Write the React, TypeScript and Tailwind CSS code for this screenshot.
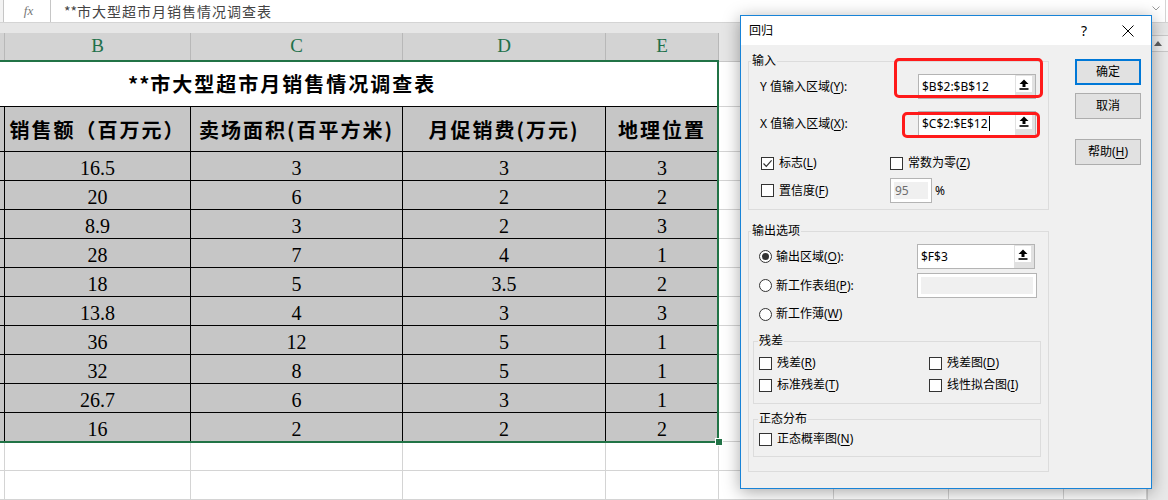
import React from 'react';

// 工作表数据
const heads = ['销售额（百万元）', '卖场面积(百平方米)', '月促销费(万元)', '地理位置'];

const data = [
  ['16.5', '3', '3', '3'],
  ['20', '6', '2', '2'],
  ['8.9', '3', '2', '3'],
  ['28', '7', '4', '1'],
  ['18', '5', '3.5', '2'],
  ['13.8', '4', '3', '3'],
  ['36', '12', '5', '1'],
  ['32', '8', '5', '1'],
  ['26.7', '6', '3', '1'],
  ['16', '2', '2', '2'],
];

const tableCols = ['w-[186px]', 'w-[212px]', 'w-[203px]', 'w-[113px]'];
const restCols = ['w-[115px]', 'w-[115px]', 'w-[115px]', 'w-[83px]'];
const letters = ['B', 'C', 'D', 'E'];

const EmptyCells = () => (
  <>
    {restCols.map((w, i) => (
      <div key={i} className={`${w} shrink-0 border-r border-b border-[#d4d4d4] bg-white`} />
    ))}
  </>
);

const SheetRow = ({ cells, head }: { cells: string[]; head?: boolean }) => (
  <div className={`flex ${head ? 'h-[45px]' : 'h-[29px]'}`}>
    <div className="w-[5px] shrink-0 bg-[#c6c6c6] border-r border-b border-black" />
    {cells.map((c, i) => (
      <div
        key={i}
        className={`${tableCols[i]} shrink-0 bg-[#c6c6c6] border-r border-b border-black flex items-center justify-center text-black ${
          head
            ? "pt-[2px] text-[20px] font-semibold tracking-[2px] font-['Noto_Sans_CJK_SC',sans-serif]"
            : "pt-[4px] text-[20px] leading-none font-['Liberation_Serif','Noto_Sans_CJK_SC',serif]"
        }`}
      >
        {c}
      </div>
    ))}
    <EmptyCells />
  </div>
);

const BlankRow = () => (
  <div className="flex h-[29px]">
    <div className="w-[5px] shrink-0 border-r border-b border-[#d4d4d4] bg-white" />
    {tableCols.map((w, i) => (
      <div key={i} className={`${w} shrink-0 border-r border-b border-[#d4d4d4] bg-white`} />
    ))}
    <EmptyCells />
  </div>
);

// 对话框小部件
const U = ({ children }: { children: React.ReactNode }) => (
  <span className="underline underline-offset-[2px]">{children}</span>
);

const UpArrow = () => (
  <svg width="10" height="11" viewBox="0 0 10 11">
    <path d="M5 0.5 L9.5 5 H6.5 V8 H3.5 V5 H0.5 Z" fill="#000" />
    <rect x="0.5" y="9.2" width="9" height="1.6" fill="#000" />
  </svg>
);

const RefInput = ({ value, caret }: { value: string; caret?: boolean }) => (
  <div className="w-[118px] h-[25px] border border-[#b4b4b4] bg-white flex">
    <div className="flex-1 flex items-center pl-[3px] text-[12px]">
      {value}
      {caret && <span className="w-px h-[15px] bg-black ml-px" />}
    </div>
    <div className="w-[20px] bg-[#e1e1e1] pt-[1px] pl-[1px]">
      <div className="w-[16px] h-[16px] bg-white flex items-center justify-center">
        <UpArrow />
      </div>
    </div>
  </div>
);

const DisabledBox = ({ className, children }: { className: string; children?: React.ReactNode }) => (
  <div className={`${className} h-[25px] border border-[#b4b4b4] bg-white p-[3px]`}>
    <div className="w-full h-full bg-[#f0f0f0] flex items-center pl-[1px] text-[#6d6d6d]">{children}</div>
  </div>
);

const Check = ({ label, checked, className = '' }: { label: React.ReactNode; checked?: boolean; className?: string }) => (
  <div className={`flex items-center gap-[5px] ${className}`}>
    <span className="w-[13px] h-[13px] shrink-0 border border-[#333] bg-white flex items-center justify-center">
      {checked && (
        <svg width="11" height="11" viewBox="0 0 11 11">
          <path d="M1.5 5.5 L4.3 8.3 L9.6 2.4" fill="none" stroke="#333" strokeWidth="1.2" />
        </svg>
      )}
    </span>
    <span>{label}</span>
  </div>
);

const Radio = ({ label, checked, className = '' }: { label: React.ReactNode; checked?: boolean; className?: string }) => (
  <div className={`flex items-center gap-[4px] ${className}`}>
    <span className="w-[13px] h-[13px] shrink-0 rounded-full border border-[#333] bg-white flex items-center justify-center">
      {checked && <span className="w-[7px] h-[7px] rounded-full bg-[#333]" />}
    </span>
    <span>{label}</span>
  </div>
);

const Legend = ({ children, className = 'ml-[2px]' }: { children: React.ReactNode; className?: string }) => (
  <legend className={`${className} px-[1px] leading-[16px]`}>{children}</legend>
);

const DialogButton = ({ children, primary, className = '' }: { children: React.ReactNode; primary?: boolean; className?: string }) => (
  <button
    className={`w-[66px] h-[26px] bg-[#e1e1e1] flex items-center justify-center text-[12px] ${
      primary ? 'border-2 border-[#0078d7]' : 'border border-[#adadad]'
    } ${className}`}
  >
    {children}
  </button>
);

const RegressionDialog = () => (
  <div className="absolute left-[740px] top-[15px] w-[412px] h-[474px] border border-[#1883d7] bg-[#f0f0f0] shadow-[0_3px_16px_rgba(0,0,0,0.35)] flex flex-col text-[12px] text-black font-['Noto_Sans','Noto_Sans_CJK_SC',sans-serif]">
    {/* 标题栏 */}
    <div className="h-[29px] bg-white flex items-center pl-[8px] pr-[17px] shrink-0">
      <span>回归</span>
      <span className="ml-auto text-[14px]">?</span>
      <svg className="ml-[35px]" width="12" height="12" viewBox="0 0 12 12">
        <path d="M0.5 0.5 L11.5 11.5 M11.5 0.5 L0.5 11.5" stroke="#000" strokeWidth="1" />
      </svg>
    </div>

    <div className="flex flex-1">
      <div className="pl-[7px] pt-[8px] w-[308px]">
        <fieldset className="w-[301px] border border-[#dcdcdc]">
          <Legend>输入</Legend>
          <div className="pl-[11px] pt-[5px] pb-[6px]">
            <div className="flex items-center h-[25px]">
              <span className="w-[158px]">Y 值输入区域(<U>Y</U>):</span>
              <RefInput value="$B$2:$B$12" />
            </div>
            <div className="flex items-center h-[25px] mt-[12px]">
              <span className="w-[158px]">X 值输入区域(<U>X</U>):</span>
              <RefInput value="$C$2:$E$12" caret />
            </div>
            <div className="flex items-center h-[16px] mt-[19px] pl-[1px]">
              <Check className="w-[129px]" checked label={<>标志(<U>L</U>)</>} />
              <Check label={<>常数为零(<U>Z</U>)</>} />
            </div>
            <div className="flex items-center h-[25px] mt-[7px] pl-[1px]">
              <Check className="w-[129px]" label={<>置信度(<U>F</U>)</>} />
              <DisabledBox className="w-[42px]">95</DisabledBox>
              <span className="ml-[3px]">%</span>
            </div>
          </div>
        </fieldset>

        <fieldset className="w-[301px] mt-[13px] border border-[#dcdcdc] pb-[14px]">
          <Legend>输出选项</Legend>
          <div className="pl-[10px] pt-[5px]">
            <div className="flex items-center h-[25px]">
              <Radio className="w-[158px]" checked label={<>输出区域(<U>O</U>):</>} />
              <RefInput value="$F$3" />
            </div>
            <div className="flex items-center h-[25px] mt-[4px]">
              <Radio className="w-[158px]" label={<>新工作表组(<U>P</U>):</>} />
              <DisabledBox className="w-[120px]" />
            </div>
            <div className="flex items-center h-[16px] mt-[8px]">
              <Radio label={<>新工作薄(<U>W</U>)</>} />
            </div>
          </div>

          <fieldset className="ml-[4px] mr-[7px] mt-[11px] border border-[#dcdcdc]">
            <Legend className="ml-[4px]">残差</Legend>
            <div className="pl-[5px] pt-[6px] pb-[10px]">
              <div className="flex items-center h-[16px]">
                <Check className="w-[170px]" label={<>残差(<U>R</U>)</>} />
                <Check label={<>残差图(<U>D</U>)</>} />
              </div>
              <div className="flex items-center h-[16px] mt-[6px]">
                <Check className="w-[170px]" label={<>标准残差(<U>T</U>)</>} />
                <Check label={<>线性拟合图(<U>I</U>)</>} />
              </div>
            </div>
          </fieldset>

          <fieldset className="ml-[4px] mr-[7px] mt-[7px] border border-[#dcdcdc]">
            <Legend className="ml-[4px]">正态分布</Legend>
            <div className="pl-[5px] pt-[4px] pb-[9px]">
              <div className="flex items-center h-[16px]">
                <Check label={<>正态概率图(<U>N</U>)</>} />
              </div>
            </div>
          </fieldset>
        </fieldset>
      </div>

      <div className="ml-[26px] pt-[14px] flex flex-col">
        <DialogButton primary>确定</DialogButton>
        <DialogButton className="mt-[8px]">取消</DialogButton>
        <DialogButton className="mt-[20px]">
          帮助(<U>H</U>)
        </DialogButton>
      </div>
    </div>

    {/* 红色标注框 */}
    <div className="absolute left-[153px] top-[42px] w-[149px] h-[40px] border-[3px] border-[#ff1a1a] rounded-[5px]" />
    <div className="absolute left-[161px] top-[96px] w-[138px] h-[26px] border-[3px] border-[#ff1a1a] rounded-[5px]" />
  </div>
);

export default function App() {
  return (
    <div className="relative w-[1168px] h-[500px] overflow-hidden bg-white font-['Noto_Sans_CJK_SC',sans-serif]">
      {/* 编辑栏 */}
      <div className="h-[23px] flex border-b border-[#d4d4d4] bg-white">
        <div className="w-[4px] border-r border-[#c6c6c6] bg-[#f3f3f3]" />
        <div className="w-[47px] border-r border-[#c6c6c6] flex items-center justify-center pl-[3px]">
          <span className="text-[13px] italic text-[#777] font-['Liberation_Serif',serif]">fx</span>
        </div>
        <div className="flex-1 flex items-center pl-[13px] text-[14px] text-[#444] border-r border-[#d4d4d4] mr-[2px]">
          <span>**</span>
          <span className="tracking-[1px]">市大型超市月销售情况调查表</span>
          <svg className="ml-auto mr-[5px] -mt-[6px]" width="8" height="5" viewBox="0 0 8 5">
            <path d="M0.5 0.5 L4 4 L7.5 0.5" fill="none" stroke="#9a9a9a" />
          </svg>
        </div>
      </div>
      <div className="h-[10px] bg-[#e6e6e6]" />

      <div className="flex">
        <div className="flex flex-col">
          {/* 列标题 */}
          <div className="flex h-[29px]">
            <div className="w-[5px] shrink-0 bg-[#d3d3d3] border-r border-r-[#b8b8b8] border-b-2 border-b-[#217346]" />
            {letters.map((l, i) => (
              <div
                key={l}
                className={`${tableCols[i]} shrink-0 bg-[#d3d3d3] border-r border-r-[#b8b8b8] border-b-2 border-b-[#217346] flex items-center justify-center text-[19px] text-[#21704a] font-['Liberation_Serif',serif]`}
              >
                {l}
              </div>
            ))}
            {restCols.map((w, i) => (
              <div key={i} className={`${w} shrink-0 bg-[#e6e6e6] border-r border-r-[#c8c8c8] border-b border-b-[#c8c8c8]`} />
            ))}
          </div>

          {/* 标题行 */}
          <div className="flex h-[45px]">
            <div className="w-[719px] shrink-0 bg-white border-r border-b border-black flex items-center pl-[128px] text-[20px] font-bold text-black">
              <span className="tracking-[1px]">**</span>
              <span className="tracking-[2px]">市大型超市月销售情况调查表</span>
            </div>
            <EmptyCells />
          </div>

          <SheetRow cells={heads} head />
          {data.map((r, i) => (
            <SheetRow key={i} cells={r} />
          ))}
          <BlankRow />
          <BlankRow />
        </div>

        {/* 滚动条 */}
        <div className="w-[21px] shrink-0 bg-[#e9e9e9] border-l border-[#c8c8c8]">
          <div className="h-[17px] mt-[2px] border-y border-[#c8c8c8] bg-[#f0f0f0] flex items-center justify-center">
            <svg width="8" height="5" viewBox="0 0 8 5">
              <path d="M4 0 L8 5 H0 Z" fill="#606060" />
            </svg>
          </div>
        </div>
      </div>

      {/* 选区 */}
      <div className="absolute left-[-3px] top-[60px] w-[722px] h-[383px] border-2 border-[#217346]" />
      <div className="absolute left-[716px] top-[439px] w-[6px] h-[6px] bg-[#217346] outline outline-1 outline-white" />

      <RegressionDialog />
    </div>
  );
}
